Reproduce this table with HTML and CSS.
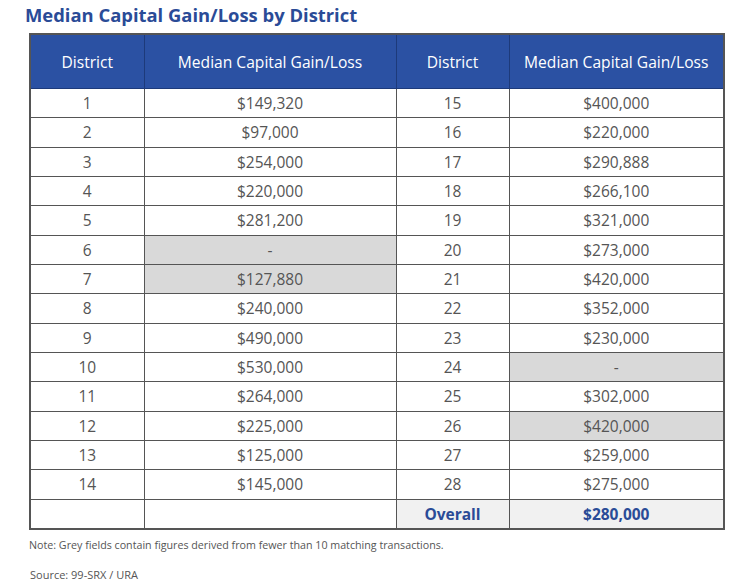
FILE: index.html
```html
<!DOCTYPE html>
<html>
<head>
<meta charset="utf-8">
<link rel="stylesheet" href="styles.css">
</head>
<body>
<div class="page">
  <h1 class="title">Median Capital Gain/Loss by District</h1>
  <table class="grid">
    <colgroup>
      <col class="c1"><col class="c2"><col class="c3"><col class="c4">
    </colgroup>
    <thead>
      <tr><th>District</th><th>Median Capital Gain/Loss</th><th>District</th><th>Median Capital Gain/Loss</th></tr>
    </thead>
    <tbody>
      <tr><td>1</td><td>$149,320</td><td>15</td><td>$400,000</td></tr>
      <tr><td>2</td><td>$97,000</td><td>16</td><td>$220,000</td></tr>
      <tr><td>3</td><td>$254,000</td><td>17</td><td>$290,888</td></tr>
      <tr><td>4</td><td>$220,000</td><td>18</td><td>$266,100</td></tr>
      <tr><td>5</td><td>$281,200</td><td>19</td><td>$321,000</td></tr>
      <tr><td>6</td><td class="grey">-</td><td>20</td><td>$273,000</td></tr>
      <tr><td>7</td><td class="grey">$127,880</td><td>21</td><td>$420,000</td></tr>
      <tr><td>8</td><td>$240,000</td><td>22</td><td>$352,000</td></tr>
      <tr><td>9</td><td>$490,000</td><td>23</td><td>$230,000</td></tr>
      <tr><td>10</td><td>$530,000</td><td>24</td><td class="grey">-</td></tr>
      <tr><td>11</td><td>$264,000</td><td>25</td><td>$302,000</td></tr>
      <tr><td>12</td><td>$225,000</td><td>26</td><td class="grey">$420,000</td></tr>
      <tr><td>13</td><td>$125,000</td><td>27</td><td>$259,000</td></tr>
      <tr><td>14</td><td>$145,000</td><td>28</td><td>$275,000</td></tr>
      <tr class="total"><td></td><td></td><td class="hl">Overall</td><td class="hl">$280,000</td></tr>
    </tbody>
  </table>
  <p class="note">Note: Grey fields contain figures derived from fewer than 10 matching transactions.</p>
  <p class="source">Source: 99-SRX / URA</p>
</div>
</body>
</html>
```
FILE: styles.css
```css
html, body {
  margin: 0;
  padding: 0;
  background: #ffffff;
}
.page {
  padding: 4px 0 0 25px;
  font-family: "Open Sans", Lato, sans-serif;
}
.title {
  margin: 0 0 7px 0;
  font-size: 18.4px;
  font-weight: 700;
  color: #2a4b97;
  line-height: 22px;
}
.grid {
  margin-left: 4px;
  width: 694px;
  border-collapse: collapse;
  table-layout: fixed;
  border: 2px solid #555;
}
.c1 { width: 114px; }
.c2 { width: 252px; }
.c3 { width: 113px; }
.c4 { width: 215px; }
.grid th {
  background: #2b51a3;
  color: #ffffff;
  font-weight: 400;
  font-size: 15.6px;
  height: 53px;
  padding: 0;
  border: 1px solid #1d3a7a;
  text-align: center;
}
.grid td {
  height: 28.33px;
  padding: 0;
  border: 1px solid #555;
  text-align: center;
  color: #555;
  font-size: 15.5px;
  line-height: 20px;
}
.grid td.grey { background: #d9d9d9; }
.grid td.hl {
  background: #f1f1f1;
  color: #2a4b97;
  font-weight: 700;
  font-size: 15.5px;
}
.note {
  margin: 8px 0 0 4px;
  font-size: 10.7px;
  color: #555;
}
.source {
  margin: 15px 0 0 5px;
  font-size: 11px;
  color: #555;
}
```
